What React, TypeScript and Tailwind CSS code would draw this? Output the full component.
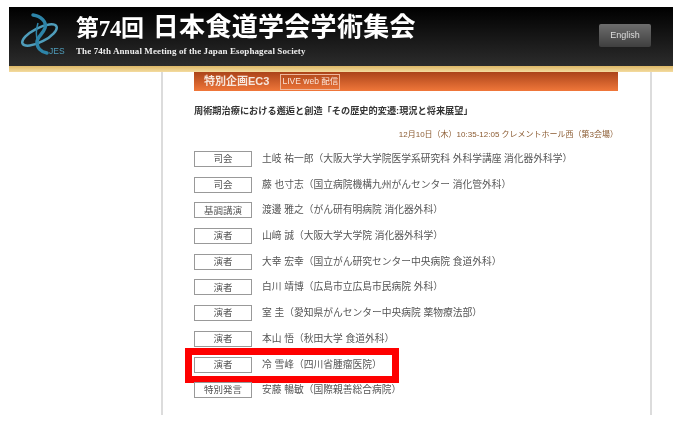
const rows = [
  { role: "司会", text: "土岐 祐一郎（大阪大学大学院医学系研究科 外科学講座 消化器外科学）" },
  { role: "司会", text: "藤 也寸志（国立病院機構九州がんセンター 消化管外科）" },
  { role: "基調講演", text: "渡邊 雅之（がん研有明病院 消化器外科）" },
  { role: "演者", text: "山﨑 誠（大阪大学大学院 消化器外科学）" },
  { role: "演者", text: "大幸 宏幸（国立がん研究センター中央病院 食道外科）" },
  { role: "演者", text: "白川 靖博（広島市立広島市民病院 外科）" },
  { role: "演者", text: "室 圭（愛知県がんセンター中央病院 薬物療法部）" },
  { role: "演者", text: "本山 悟（秋田大学 食道外科）" },
  { role: "演者", text: "冷 雪峰（四川省腫瘤医院）", marked: true },
  { role: "特別発言", text: "安藤 暢敏（国際親善総合病院）" },
];

const sans = "font-['Liberation_Sans','Noto_Sans_CJK_JP',sans-serif]";

function Logo() {
  return (
    <svg width="54" height="48" viewBox="0 0 54 48" fill="none" className="shrink-0">
      <ellipse cx="19.5" cy="22" rx="19" ry="7" transform="rotate(-27 19.5 22)" stroke="#4f9dbb" strokeWidth="2.5" />
      <path d="M13 2C21 3 27 9 25 15S17 24 17 29C17 35 21 39 27 40" stroke="#2d84a8" strokeWidth="3.5" strokeLinecap="round" />
      <path d="M18 10C16 16 16 24 18 30" stroke="#2d84a8" strokeWidth="1.5" />
      <text x="29" y="41" fontSize="8.5" fill="#4f9dbb" fontFamily="Liberation Sans, sans-serif">JES</text>
    </svg>
  );
}

function Row({ role, text, marked }: { role: string; text: string; marked?: boolean }) {
  return (
    <div className="relative flex h-[25.7px] items-start">
      {marked ? (
        <div className="absolute top-[-9px] left-[-9px] h-[35px] w-[214px] border-[7px] border-[#fe0000]" />
      ) : null}
      <div className="flex h-[16px] w-[58px] shrink-0 items-center justify-center border border-[#999] text-[9.5px] leading-none text-[#555] blur-[0.3px]">
        {role}
      </div>
      <div className="ml-[10px] text-[9.75px] leading-[16px] text-[#555] blur-[0.3px]">{text}</div>
    </div>
  );
}

export default function App() {
  return (
    <div className={`h-[428px] w-[673px] overflow-hidden bg-white pt-[7px] pl-[9px] ${sans}`}>
      <header className="flex h-[59px] items-start bg-[linear-gradient(#000000,#2c2c2c)] pt-[6px] pl-[11px]">
        <div className="blur-[0.3px]">
          <Logo />
        </div>
        <div className="ml-[2px] text-white blur-[0.3px]">
          <div className="flex h-[30px] items-center font-['Liberation_Serif','Noto_Sans_CJK_JP',serif] leading-none font-bold">
            <span className="text-[23px] tracking-[-0.3px]">第74回</span>
            <span className="ml-[9px] text-[26px] tracking-[0.3px]">日本食道学会学術集会</span>
          </div>
          <div className="mt-[2px] font-['Liberation_Serif',serif] text-[9px] leading-[12px] font-bold tracking-[0.1px] text-[#eee]">
            The 74th Annual Meeting of the Japan Esophageal Society
          </div>
        </div>
        <button
          type="button"
          className="mt-[11px] mr-[22px] ml-auto h-[23px] w-[52px] rounded-[2px] bg-[linear-gradient(#6d6d6d,#3f3f3f)] text-[9px] text-[#ddd] blur-[0.3px]"
        >
          English
        </button>
      </header>
      <div className="h-[6px] bg-[linear-gradient(#dcb767,#f4dca0)]" />
      <div className="ml-[152px] h-[343px] w-[491px] border-x-[2px] border-[#dcdcdc] pl-[31px]">
        <div className="flex h-[19px] w-[424px] items-center bg-[linear-gradient(#ab441a,#f0773a)] pl-[10px]">
          <span className="text-[11px] font-bold text-[#f6e6dc] blur-[0.3px]">特別企画EC3</span>
          <span className="ml-[11px] flex h-[16px] w-[60px] items-center justify-center border border-[#eeb79c] text-[8.5px] text-[#fbe5d9] blur-[0.3px]">
            LIVE web 配信
          </span>
        </div>
        <h2 className="mt-[13px] text-[9.2px] leading-[14px] font-bold text-[#333] blur-[0.3px]">
          周術期治療における邂逅と創造「その歴史的変遷:現況と将来展望」
        </h2>
        <p className="mt-[11px] w-[424px] text-right text-[8px] leading-[12px] text-[#8a5a30] blur-[0.3px]">
          12月10日（木）10:35-12:05 クレメントホール西（第3会場）
        </p>
        <div className="mt-[10px]">
          {rows.map((row) => (
            <Row key={row.text} {...row} />
          ))}
        </div>
      </div>
    </div>
  );
}
